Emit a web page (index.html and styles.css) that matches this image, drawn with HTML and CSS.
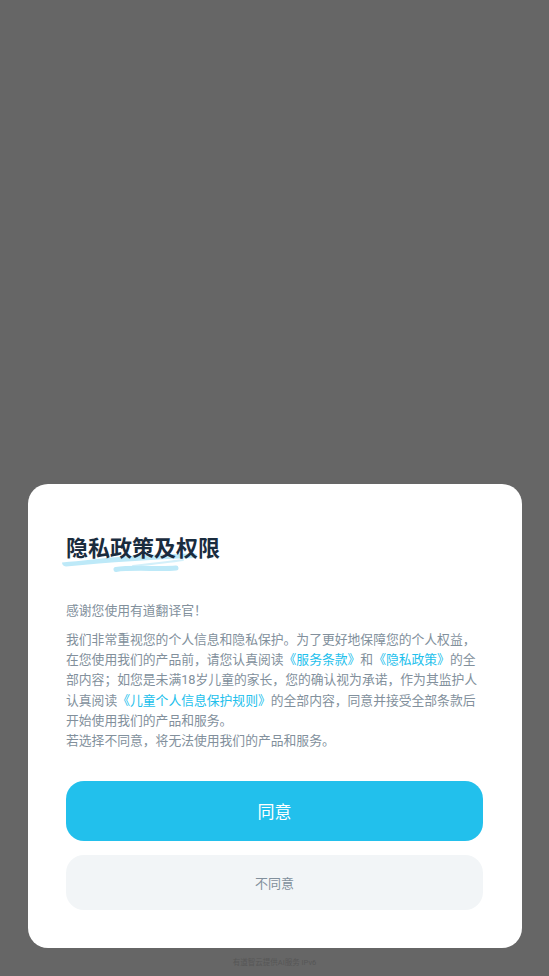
FILE: index.html
```html
<!DOCTYPE html>
<html lang="zh-CN">
<head>
<meta charset="utf-8">
<title>隐私政策及权限</title>
<link rel="stylesheet" href="styles.css">
</head>
<body>
<main class="screen">
  <section class="card">
    <div class="title-wrap">
      <svg class="scribble" viewBox="0 0 160 30" width="160" height="30" aria-hidden="true">
        <path class="stroke-fill" d="M1 12.5 C40 9 70 4 134 3.5 C137 4 137 7 134 8 C90 9.5 50 12 5 16.5 C2 16 1 14 1 12.5 Z"/>
        <path class="stroke-thin" d="M72 16 C90 14 108 12 122 10"/>
        <path class="stroke-blob" d="M55 19.5 C70 17 100 19.5 115 18"/>
      </svg>
      <h1 class="title">隐私政策及权限</h1>
    </div>
    <p class="greeting">感谢您使用有道翻译官！</p>
    <p class="body">我们非常重视您的个人信息和隐私保护。为了更好地保障您的个人权益，在您使用我们的产品前，请您认真阅读<a class="link">《服务条款》</a>和<a class="link">《隐私政策》</a>的全部内容；如您是未满18岁儿童的家长，您的确认视为承诺，作为其监护人认真阅读<a class="link">《儿童个人信息保护规则》</a>的全部内容，同意并接受全部条款后开始使用我们的产品和服务。<br>若选择不同意，将无法使用我们的产品和服务。</p>
    <button class="btn btn-agree">同意</button>
    <button class="btn btn-decline">不同意</button>
  </section>
  <footer class="footer">有道智云提供AI服务 IPv6</footer>
</main>
</body>
</html>
```
FILE: styles.css
```css
* { box-sizing: border-box; }
html, body { margin: 0; height: 100%; }
body {
  background: #666666;
  font-family: Roboto, "Noto Sans CJK SC", "Noto Sans", sans-serif;
}
.screen {
  height: 976px;
  display: flex;
  flex-direction: column;
  justify-content: flex-end;
  align-items: flex-start;
}
.card {
  width: 494px;
  height: 464px;
  margin-left: 27.5px;
  background: #fff;
  border-radius: 20px;
  padding: 47px 38.5px 0;
  display: flex;
  flex-direction: column;
}
.title-wrap { position: relative; height: 39px; }
.title {
  position: relative;
  margin: 0;
  font-size: 22px;
  line-height: 36px;
  font-weight: 700;
  color: #1a2c3e;
}
.scribble { position: absolute; left: -5px; top: 19px; }
.stroke-fill { fill: #bde9f8; }
.stroke-thin { fill: none; stroke: #d3f0fa; stroke-width: 2; stroke-linecap: round; }
.stroke-blob { fill: none; stroke: #bde9f8; stroke-width: 5; stroke-linecap: round; }
.greeting, .body {
  margin: 0;
  font-size: 12.8px;
  color: #82909c;
}
.greeting { margin-top: 31px; line-height: 20px; }
.body { margin-top: 9.4px; line-height: 20.05px; }
.link { color: #22c0ec; }
.btn {
  display: block;
  width: 417px;
  border: 0;
  font-family: inherit;
}
.btn-agree {
  height: 60px;
  margin-top: 30.5px;
  padding-bottom: 3px;
  border-radius: 18px;
  background: #22c0ec;
  color: #fff;
  font-size: 17px;
}
.btn-decline {
  height: 55px;
  margin-top: 14px;
  padding-bottom: 2px;
  border-radius: 18px;
  background: #f2f5f7;
  color: #82909c;
  font-size: 13px;
}
.footer {
  align-self: center;
  height: 28px;
  padding-top: 9px;
  font-size: 7.5px;
  line-height: 11px;
  color: #565656;
  white-space: nowrap;
}
```
